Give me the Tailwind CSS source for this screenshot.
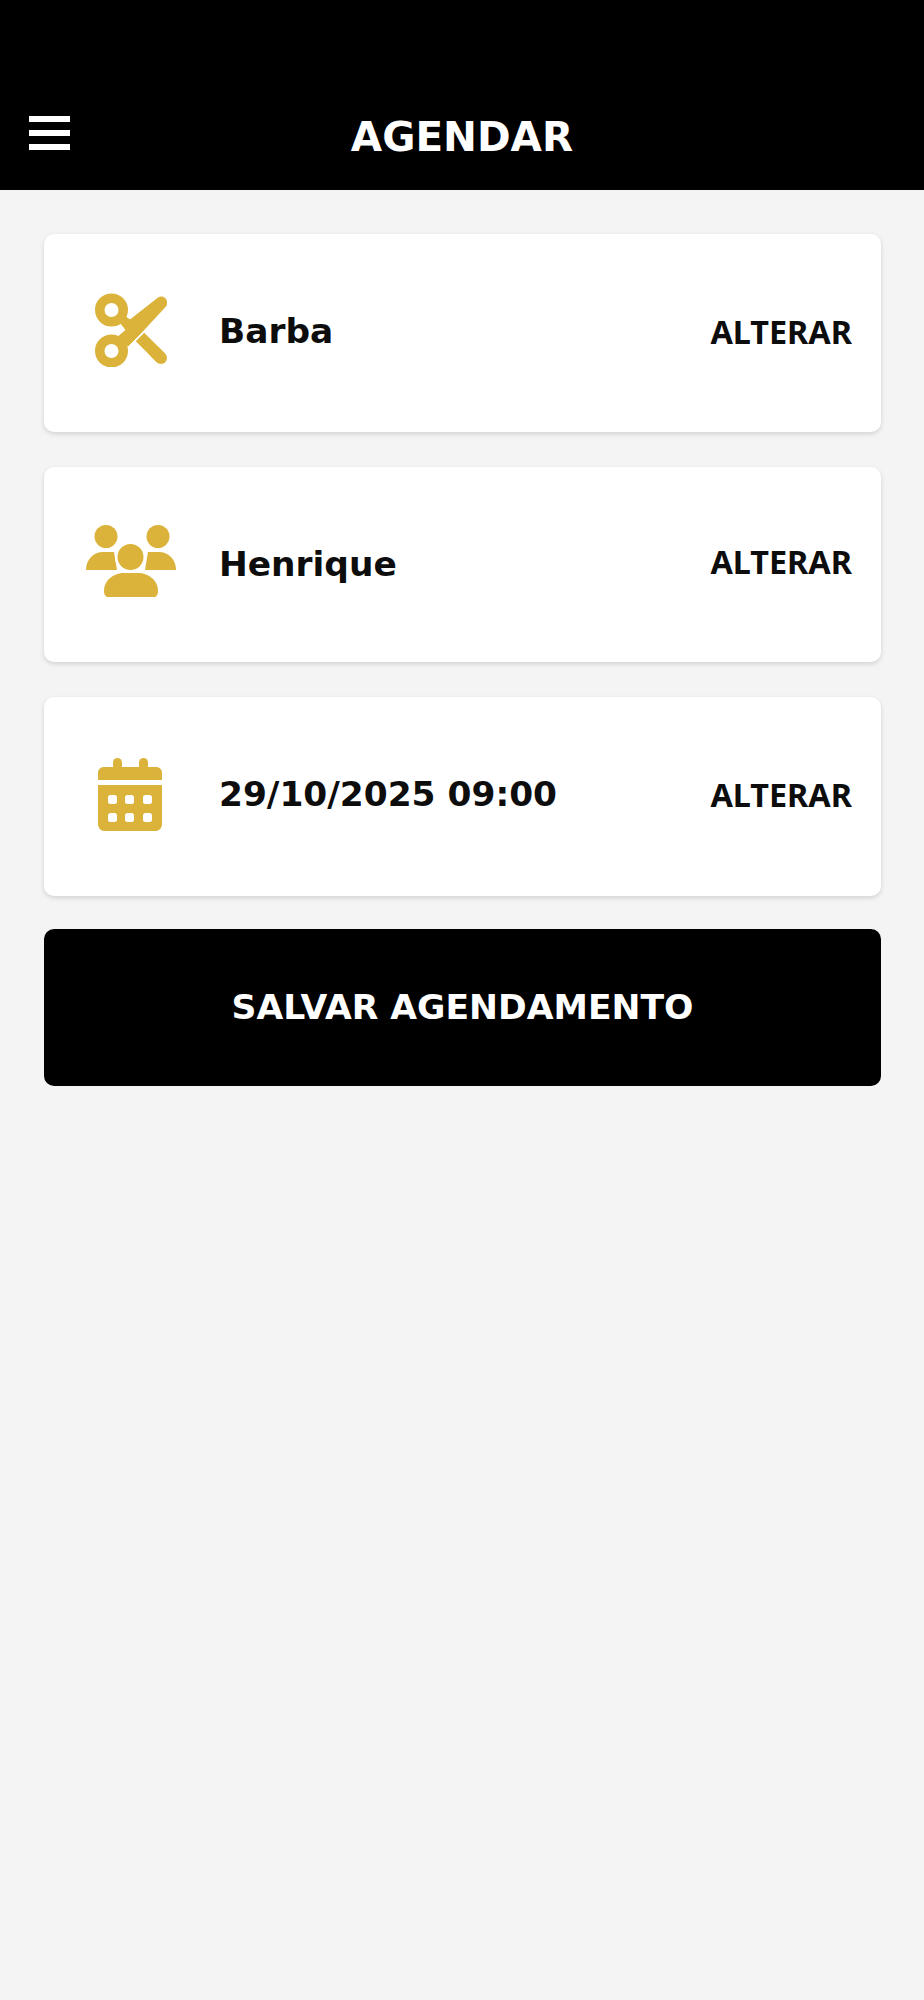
<!DOCTYPE html>
<html lang="pt-BR">
  <head>
    <meta charset="UTF-8" />
    <title>Agendar</title>
    <meta name="viewport" content="width=device-width, initial-scale=1.0" />
    <script src="https://cdn.jsdelivr.net/npm/@tailwindcss/browser@4"></script>
  </head>

  <body class="min-h-screen bg-[#f4f4f4] font-['DejaVu_Sans',sans-serif]">
    <!-- Header -->
    <header class="h-[190px] bg-black flex flex-col justify-end pb-[32px]">
      <div class="grid grid-cols-[1fr_auto_1fr] items-start px-[29px] h-[50px]">
        <button class="flex flex-col gap-[8px] w-[41px] mt-[8px]">
          <span class="block h-[6px] bg-white"></span>
          <span class="block h-[6px] bg-white"></span>
          <span class="block h-[6px] bg-white"></span>
        </button>
        <h1 class="text-[40.5px] font-bold text-white leading-[50px] mt-[4px]">AGENDAR</h1>
      </div>
    </header>

    <main class="pl-[44px] pr-[43px] pt-[44px] w-[924px]">
      <!-- Servico -->
      <section class="h-[198px] bg-white rounded-[10px] shadow-[0_2px_5px_rgba(0,0,0,0.14)] flex items-center pl-[42px] pr-[29px] text-[#0d0d0d]">
        <div class="w-[90px] flex justify-center -mt-[6px]">
          <svg width="72" height="74" viewBox="0 0 72 74" fill="#dbb33a" stroke="#dbb33a">
            <circle cx="16.5" cy="17" r="11.75" stroke-width="9.5" fill="none" />
            <circle cx="16.5" cy="58" r="11.75" stroke-width="9.5" fill="none" />
            <path d="M63 5 C66 3 70 4 71 7 C72 10 72 12 70 14 L45 41 L33 53 L24 43 L31 37 L24 28 L28 22 L35 27 Z" stroke-width="1" stroke-linejoin="round" />
            <path d="M45 44 L66 65" stroke-width="12" fill="none" />
            <path d="M60 59 L66 65" stroke-width="12" stroke-linecap="round" fill="none" />
          </svg>
        </div>
        <p class="ml-[43px] text-[34.4px] font-bold leading-none -mt-[4px]">Barba</p>
        <button class="ml-auto text-[32.4px] font-bold leading-none font-['Noto_Sans',sans-serif] -mt-[4px]">ALTERAR</button>
      </section>

      <!-- Profissional -->
      <section class="mt-[35px] h-[195px] bg-white rounded-[10px] shadow-[0_2px_5px_rgba(0,0,0,0.14)] flex items-center pl-[42px] pr-[29px] text-[#0d0d0d]">
        <div class="w-[90px] flex justify-center -mt-[7px]">
          <svg width="90" height="72" viewBox="0 0 90 72" fill="#dbb33a">
            <circle cx="20" cy="11.5" r="11.5" />
            <circle cx="72" cy="11.5" r="11.5" />
            <path d="M0 45 C0 34 8 27 17 27 H28 L31 45 Z" />
            <path d="M90 45 C90 34 82 27 73 27 H62 L59 45 Z" />
            <circle cx="44.5" cy="32" r="15.5" fill="#fff" />
            <circle cx="44.5" cy="32" r="13" />
            <path d="M18 66 C18 55 28 48 38 48 H52 C62 48 72 55 72 66 C72 70 70 72 68 72 H22 C20 72 18 70 18 66 Z" />
          </svg>
        </div>
        <p class="ml-[43px] text-[34.4px] font-bold leading-none">Henrique</p>
        <button class="ml-auto text-[32.4px] font-bold leading-none font-['Noto_Sans',sans-serif] -mt-[7px]">ALTERAR</button>
      </section>

      <!-- Data e hora -->
      <section class="mt-[35px] h-[199px] bg-white rounded-[10px] shadow-[0_2px_5px_rgba(0,0,0,0.14)] flex items-center pl-[42px] pr-[29px] text-[#0d0d0d]">
        <div class="w-[90px] flex justify-center -mt-[4px]">
          <svg class="mr-[2px]" width="64" height="73" viewBox="0 0 64 73" fill="#dbb33a">
            <rect x="15" y="0" width="9" height="12" rx="4.5" />
            <rect x="41" y="0" width="9" height="12" rx="4.5" />
            <path d="M0 22 V15 C0 11 3 9 6 9 H58 C61 9 64 11 64 15 V22 Z" />
            <path d="M0 27 H64 V66 C64 70 61 73 58 73 H6 C3 73 0 70 0 66 Z" />
            <g fill="#fff">
              <rect x="10" y="37" width="9" height="9" rx="2.5" />
              <rect x="27" y="37" width="9" height="9" rx="2.5" />
              <rect x="45" y="37" width="9" height="9" rx="2.5" />
              <rect x="10" y="55" width="9" height="9" rx="2.5" />
              <rect x="27" y="55" width="9" height="9" rx="2.5" />
              <rect x="45" y="55" width="9" height="9" rx="2.5" />
            </g>
          </svg>
        </div>
        <p class="ml-[43px] text-[34.4px] font-bold leading-none -mt-[4px]">29/10/2025 09:00</p>
        <button class="ml-auto text-[32.4px] font-bold leading-none font-['Noto_Sans',sans-serif] -mt-[4px]">ALTERAR</button>
      </section>

      <button class="mt-[33px] w-full h-[157px] bg-black rounded-[10px] text-white text-[34.6px] font-bold">SALVAR AGENDAMENTO</button>
    </main>
  </body>
</html>
